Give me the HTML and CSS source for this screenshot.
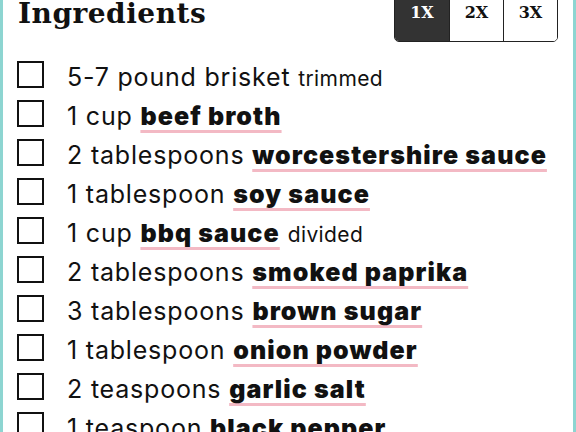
FILE: index.html
```html
<!DOCTYPE html>
<html lang="en">
<head>
<meta charset="utf-8">
<title>Ingredients</title>
<link rel="stylesheet" href="styles.css">
</head>
<body>
<div class="page">
  <header class="head">
    <h1 class="title">Ingredients</h1>
    <div class="scale">
      <button class="scale-btn is-on">1x</button>
      <button class="scale-btn">2x</button>
      <button class="scale-btn">3x</button>
    </div>
  </header>
  <ul class="list">
    <li class="item"><span class="box"></span><span class="txt">5-7 pound brisket <span class="note">trimmed</span></span></li>
    <li class="item"><span class="box"></span><span class="txt">1 cup <strong class="name">beef broth</strong></span></li>
    <li class="item"><span class="box"></span><span class="txt">2 tablespoons <strong class="name">worcestershire sauce</strong></span></li>
    <li class="item"><span class="box"></span><span class="txt">1 tablespoon <strong class="name">soy sauce</strong></span></li>
    <li class="item"><span class="box"></span><span class="txt">1 cup <strong class="name">bbq sauce</strong> <span class="note">divided</span></span></li>
    <li class="item"><span class="box"></span><span class="txt">2 tablespoons <strong class="name">smoked paprika</strong></span></li>
    <li class="item"><span class="box"></span><span class="txt">3 tablespoons <strong class="name">brown sugar</strong></span></li>
    <li class="item"><span class="box"></span><span class="txt">1 tablespoon <strong class="name">onion powder</strong></span></li>
    <li class="item"><span class="box"></span><span class="txt">2 teaspoons <strong class="name">garlic salt</strong></span></li>
    <li class="item"><span class="box"></span><span class="txt">1 teaspoon <strong class="name">black pepper</strong></span></li>
  </ul>
</div>
</body>
</html>
```
FILE: styles.css
```css
html, body {
  margin: 0;
  padding: 0;
  background: #ffffff;
}
body {
  height: 432px;
  overflow: hidden;
}
.page {
  box-sizing: border-box;
  height: 432px;
  border-left: 3px solid #8dd5d1;
  border-right: 3px solid #8dd5d1;
  padding: 0 15px 0 14px;
  color: #111111;
  font-family: Inter, "Noto Sans", sans-serif;
}
.head {
  display: flex;
  justify-content: space-between;
  align-items: flex-start;
}
.title {
  margin: -2px 0 0 1px;
  font-family: "DejaVu Serif", serif;
  font-weight: 700;
  font-size: 28px;
  line-height: 32px;
  letter-spacing: 0.5px;
}
.scale {
  display: flex;
  margin-top: -4px;
  border: 1px solid #222222;
  border-radius: 0 0 5px 5px;
  overflow: hidden;
}
.scale-btn {
  display: block;
  width: 54px;
  margin: 0;
  padding: 7px 0 19px;
  border: 0;
  border-left: 1px solid #222222;
  background: #ffffff;
  color: #111111;
  font-family: "DejaVu Serif", serif;
  font-weight: 700;
  font-size: 16px;
  line-height: 18px;
  text-transform: uppercase;
}
.scale-btn:first-child {
  border-left: 0;
}
.scale-btn.is-on {
  background: #333333;
  color: #ffffff;
}
.list {
  list-style: none;
  margin: 19px 0 0;
  padding: 0;
}
.item {
  display: flex;
  align-items: flex-start;
  height: 39px;
}
.box {
  box-sizing: border-box;
  flex: none;
  width: 27px;
  height: 27px;
  border: 2px solid #111111;
}
.txt {
  margin-left: 23px;
  margin-top: 3px;
  font-size: 25px;
  line-height: 27px;
  letter-spacing: 0.8px;
  white-space: nowrap;
}
.name {
  font-weight: 900;
  letter-spacing: 1.1px;
  text-decoration: underline;
  text-decoration-color: #f3b9c4;
  text-decoration-thickness: 3px;
  text-underline-offset: 5px;
  text-decoration-skip-ink: none;
}
.note {
  font-size: 21px;
  letter-spacing: 0.4px;
}
```
